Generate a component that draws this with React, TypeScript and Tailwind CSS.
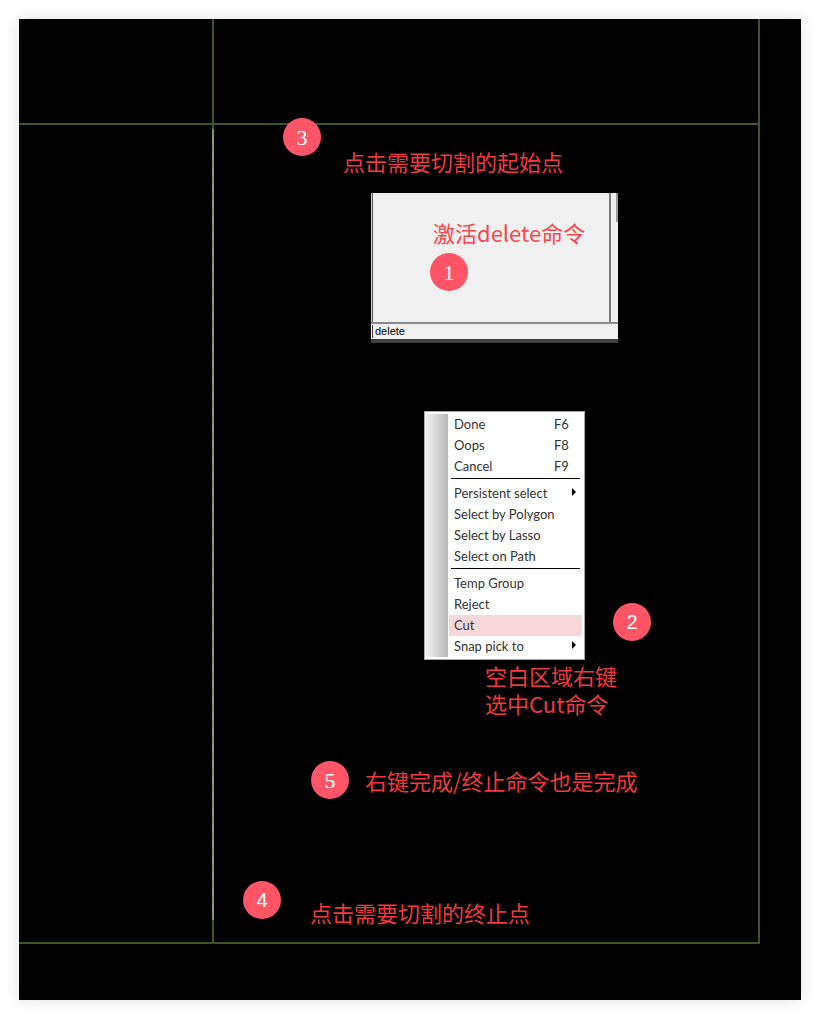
import React from "react";

type Item = { label: string; key?: string; sub?: boolean; active?: boolean };

const groups: Item[][] = [
  [
    { label: "Done", key: "F6" },
    { label: "Oops", key: "F8" },
    { label: "Cancel", key: "F9" },
  ],
  [
    { label: "Persistent select", sub: true },
    { label: "Select by Polygon" },
    { label: "Select by Lasso" },
    { label: "Select on Path" },
  ],
  [
    { label: "Temp Group" },
    { label: "Reject" },
    { label: "Cut", active: true },
    { label: "Snap pick to", sub: true },
  ],
];

function Step({ n, serif, className }: { n: number; serif?: boolean; className: string }) {
  return (
    <div
      className={`absolute w-[38px] h-[38px] rounded-full bg-[#ff5567] flex items-center justify-center text-white ${
        serif ? "font-['Liberation_Serif',serif] text-[22px]" : "font-['Liberation_Sans',sans-serif] text-[20px]"
      } ${className}`}
    >
      {n}
    </div>
  );
}

function Note({ lines, className }: { lines: string[]; className: string }) {
  return (
    <div className={`absolute flex flex-col gap-[2px] font-['Noto_Sans_CJK_SC',sans-serif] text-[22px] leading-[26px] text-[#f0393f] whitespace-nowrap ${className}`}>
      {lines.map((l) => (
        <span key={l}>{l}</span>
      ))}
    </div>
  );
}

function CommandWindow() {
  return (
    <div className="absolute left-[352px] top-[174px] w-[247px] h-[150px] flex flex-col bg-[#f0f0f0]">
      <div className="flex h-[129px]">
        <div className="w-px bg-[#c8c8c8]" />
        <div className="w-px bg-[#5c5c5c]" />
        <div className="flex-1" />
        <div className="w-[2px] bg-[#7a7a7a]" />
        <div className="w-[5px]" />
        <div className="w-[2px] flex flex-col">
          <div className="h-[29px] bg-[#9a9a9a]" />
        </div>
      </div>
      <div className="h-[2px] bg-[#8a8a8a]" />
      <div className="flex h-[15px] items-center">
        <div className="w-px h-full" />
        <div className="w-px h-[13px] bg-[#3c3c3c]" />
        <span className="pl-[2px] font-['Liberation_Sans',sans-serif] text-[11px] leading-none text-black">delete</span>
      </div>
      <div className="flex-1 bg-[#404040]" />
    </div>
  );
}

function ContextMenu() {
  return (
    <div className="absolute left-[405px] top-[392px] w-[161px] h-[249px] border border-[#a9a9a9] bg-white flex">
      <div className="w-[23px] my-[2px] bg-[linear-gradient(to_right,#f2f2f2,#b9b9b9)]" />
      <div className="flex-1 pt-[2px] font-['Lato',sans-serif] text-[13px] text-[#333]">
        {groups.map((g, gi) => (
          <div key={gi}>
            {gi > 0 && <div className="mt-px mb-[4px] ml-[3px] mr-[4px] h-px bg-black" />}
            {g.map((it) => (
              <div
                key={it.label}
                className={`relative h-[21px] flex items-center pl-[5px] ml-px mr-[2px] ${it.active ? "bg-[#f7d7d9]" : ""}`}
              >
                <span>{it.label}</span>
                {it.key && <span className="absolute left-[105px]">{it.key}</span>}
                {it.sub && (
                  <span className="absolute left-[123px] top-[5px] w-0 h-0 border-y-[4px] border-y-transparent border-l-[4px] border-l-black" />
                )}
              </div>
            ))}
          </div>
        ))}
      </div>
    </div>
  );
}

export default function App() {
  return (
    <div className="w-[820px] h-[1019px] bg-white p-[19px]">
      <div className="relative w-[782px] h-[981px] bg-black shadow-[0_0_14px_rgba(0,0,0,0.12)] overflow-hidden">
        {/* drawing outline */}
        <div className="absolute left-[193px] top-0 w-[2px] h-[925px] bg-[#3d5624]" />
        <div className="absolute left-[739px] top-0 w-[2px] h-[925px] bg-[#3d5624]" />
        <div className="absolute left-0 top-[104px] w-[741px] h-[2px] bg-[#3d5624]" />
        <div className="absolute left-0 top-[923px] w-[741px] h-[2px] bg-[#3d5624]" />
        {/* highlighted cut segment */}
        <div className="absolute left-[193px] top-[110px] w-[2px] h-[791px] bg-[repeating-linear-gradient(to_bottom,#74a046_0px,#74a046_8px,#949494_8px,#949494_16px)]" />

        <CommandWindow />
        <ContextMenu />

        <Step n={3} serif className="left-[264px] top-[99px]" />
        <Note lines={["点击需要切割的起始点"]} className="left-[324px] top-[129px]" />

        <Note lines={["激活delete命令"]} className="left-[414px] top-[200px] text-[#f4474e]" />
        <Step n={1} serif className="left-[411px] top-[234px]" />

        <Step n={2} className="left-[594px] top-[584px]" />
        <Note lines={["空白区域右键", "选中Cut命令"]} className="left-[466px] top-[643px]" />

        <Step n={5} serif className="left-[292px] top-[742px]" />
        <Note lines={["右键完成/终止命令也是完成"]} className="left-[346px] top-[748px]" />

        <Step n={4} className="left-[224px] top-[862px]" />
        <Note lines={["点击需要切割的终止点"]} className="left-[291px] top-[880px]" />
      </div>
    </div>
  );
}
